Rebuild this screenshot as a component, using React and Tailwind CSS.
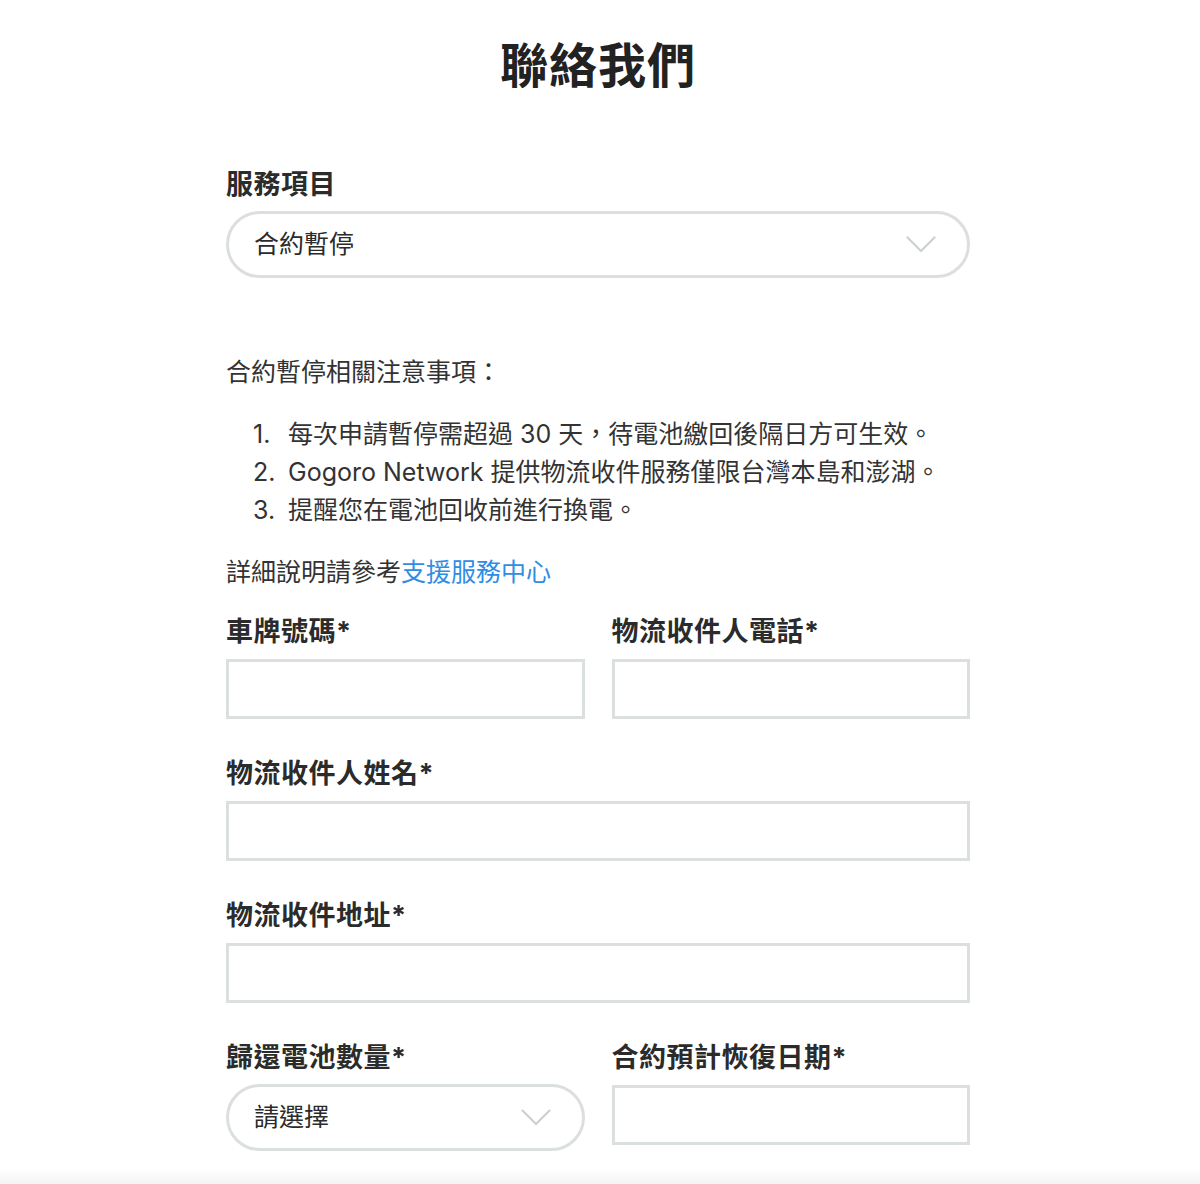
const font = {
  fontFamily: '"Inter", "Noto Sans CJK TC", sans-serif',
};

function Chevron() {
  return (
    <svg width="30" height="17" viewBox="0 0 30 17" fill="none" className="shrink-0">
      <path d="M1.5 1.5 L15 15 L28.5 1.5" stroke="#cdd1d1" strokeWidth="2.2" strokeLinecap="round" strokeLinejoin="round" />
    </svg>
  );
}

function Label({ children }) {
  return (
    <p className="text-[27px] leading-[36px] font-bold text-[#2b2b2b] tracking-[0.5px]">{children}</p>
  );
}

function TextBox() {
  return <div className="mt-[9px] h-[60px] w-full border-[3px] border-[#dcdfdf] bg-white" />;
}

function SelectBox({ value }) {
  return (
    <div className="mt-[8px] h-[67px] w-full rounded-full border-[3px] border-[#dcdfdf] bg-white flex items-center justify-between pl-[25px] pr-[31px]">
      <span className="text-[25px] text-[#2b2b2b]">{value}</span>
      <Chevron />
    </div>
  );
}

const notes = [
  "每次申請暫停需超過 30 天，待電池繳回後隔日方可生效。",
  "Gogoro Network 提供物流收件服務僅限台灣本島和澎湖。",
  "提醒您在電池回收前進行換電。",
];

export default function App() {
  return (
    <div style={font} className="h-[1184px] bg-white flex flex-col">
      <div className="w-[744px] ml-[226px]">
        <h1 className="pt-[36px] text-center text-[48px] leading-[60px] font-bold text-[#222] tracking-[1px]">
          聯絡我們
        </h1>

        <div className="mt-[71px]">
          <Label>服務項目</Label>
          <SelectBox value="合約暫停" />
        </div>

        <p className="mt-[76px] text-[25px] leading-[36px] text-[#333]">合約暫停相關注意事項：</p>

        <ol className="mt-[25px] pl-[27px]">
          {notes.map((n, i) => (
            <li key={i} className="flex text-[25px] leading-[38px] text-[#333]">
              <span className="w-[35px] shrink-0">{i + 1}.</span>
              <span>{n}</span>
            </li>
          ))}
        </ol>

        <p className="mt-[25px] text-[25px] leading-[36px] text-[#333]">
          詳細說明請參考<a className="text-[#2f8de4]">支援服務中心</a>
        </p>

        <div className="mt-[24px] grid grid-cols-2 gap-x-[27px]">
          <div>
            <Label>車牌號碼*</Label>
            <TextBox />
          </div>
          <div>
            <Label>物流收件人電話*</Label>
            <TextBox />
          </div>
        </div>

        <div className="mt-[37px]">
          <Label>物流收件人姓名*</Label>
          <TextBox />
        </div>

        <div className="mt-[37px]">
          <Label>物流收件地址*</Label>
          <TextBox />
        </div>

        <div className="mt-[37px] grid grid-cols-2 gap-x-[27px] items-start">
          <div>
            <Label>歸還電池數量*</Label>
            <SelectBox value="請選擇" />
          </div>
          <div>
            <Label>合約預計恢復日期*</Label>
            <TextBox />
          </div>
        </div>
      </div>
      <div className="mt-auto h-[16px] bg-linear-to-b from-white to-[#f3f3f3]" />
    </div>
  );
}
